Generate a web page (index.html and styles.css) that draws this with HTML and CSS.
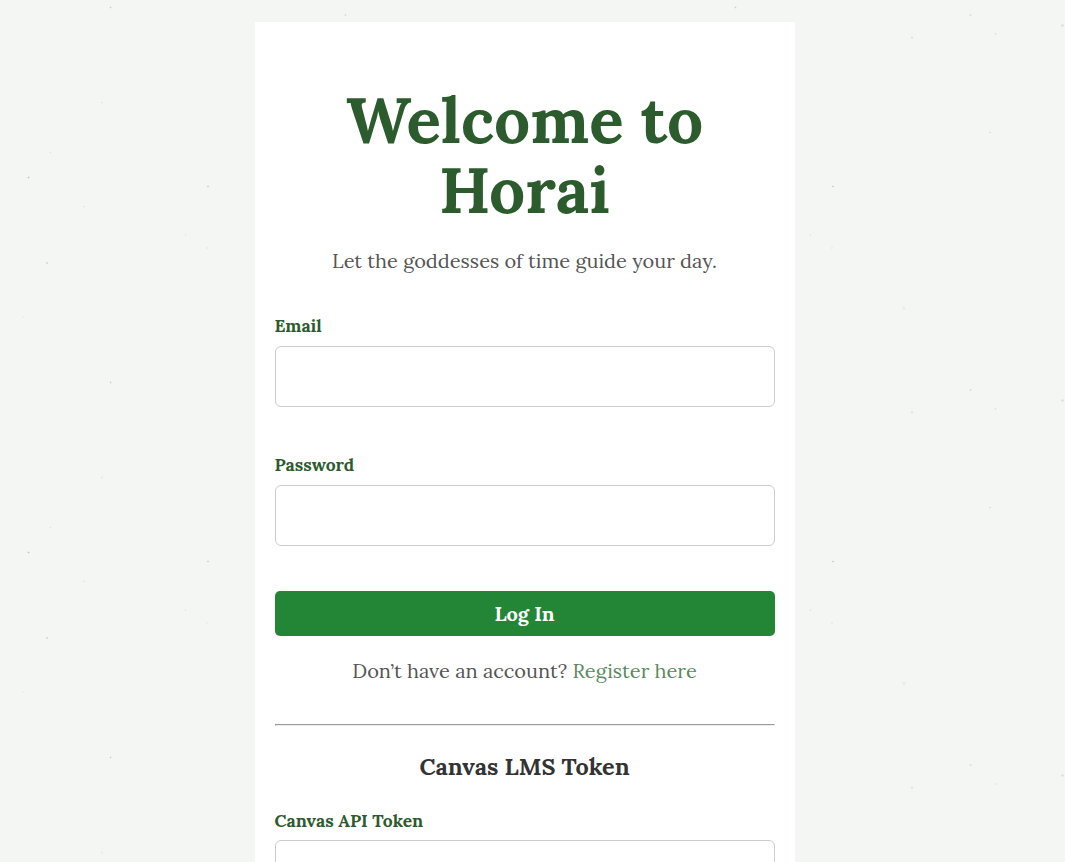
FILE: index.html
```html
<!DOCTYPE html>
<html lang="en">
<head>
    <title>Horai</title>
    <meta charset="UTF-8">
    <meta name="viewport" content="width=device-width, initial-scale=1">
    <link rel="stylesheet" href="styles.css">
</head>

<body>

    <main class="login_container">
        <h1 class="title">Welcome to Horai</h1>
        <p class="tagline">Let the goddesses of time guide your day.</p>

        <form class="login_form">
            <div class="field">
                <label for="email">Email</label>
                <input type="email" id="email">
            </div>
            <div class="field">
                <label for="password">Password</label>
                <input type="password" id="password">
            </div>
            <button type="submit" class="login_btn">Log In</button>
        </form>

        <p class="register">Don’t have an account? <a href="#">Register here</a></p>

        <hr>

        <h3 class="token_title">Canvas LMS Token</h3>
        <form class="token_form">
            <label class="label_token" for="token">Canvas API Token</label>
            <input type="text" id="token">
        </form>
    </main>

</body>
</html>
```
FILE: styles.css
```css
*, *:before, *:after {
    box-sizing: border-box;
}

html{
    overflow: hidden;
    height: 100%;
}

/* speckled paper, repeats every 625 x 375 */
body{
    margin: 0;
    padding: 22px 16px 0 0;
    height: 100%;
    overflow: hidden;
    font-family: "Lora", "Liberation Serif", serif;
    color: #555;
    background-color: #f4f6f3;
    background-image:
        radial-gradient(circle at 110.5px 7.5px, #cbcecb 0.5px, transparent 1.2px),
        radial-gradient(circle at 28.5px 177.5px, #c6cac6 0.6px, transparent 1.3px),
        radial-gradient(circle at 208px 186.5px, #ced1ce 0.5px, transparent 1.2px),
        radial-gradient(circle at 47px 263px, #dadddA 0.8px, transparent 1.5px),
        radial-gradient(circle at 102px 102.5px, #e6e9e5 0.6px, transparent 1.3px),
        radial-gradient(circle at 50.5px 152.5px, #e1e4e1 0.5px, transparent 1.2px),
        radial-gradient(circle at 84px 206.5px, #e3e6e3 0.5px, transparent 1.2px),
        radial-gradient(circle at 185.5px 235px, #e5e8e5 0.5px, transparent 1.2px),
        radial-gradient(circle at 207px 248px, #e7eae6 0.5px, transparent 1.3px),
        radial-gradient(circle at 23.5px 317px, #eaedea 0.6px, transparent 1.4px),
        radial-gradient(circle at 345.5px 15px, #dadddb 0.6px, transparent 1.3px),
        radial-gradient(circle at 287px 37.5px, #dfe2e0 0.6px, transparent 1.3px),
        radial-gradient(circle at 370.5px 34px, #e2e5e1 0.6px, transparent 1.3px),
        radial-gradient(ellipse at 365px 132.5px, #dedbd1 0.6px, transparent 1.5px),
        radial-gradient(circle at 437.5px 25.5px, #dbdedb 0.7px, transparent 1.7px),
        radial-gradient(circle at 279px 308.5px, #eaedea 1px, transparent 2.4px);
    background-size: 625px 375px;
}

h1, h3, p{
    margin: 0;
    text-align: center;
}

.login_container{
    width: 540px;
    height: 840px;
    margin: 0 auto;
    padding: 63px 20px 0;
    overflow: hidden;
    background: white;
}

.title{
    color: #2c5b2d;
    font-size: 64px;
    line-height: 70px;
}

.tagline, .register{
    font-size: 20px;
    line-height: 36px;
}

.tagline{
    margin-top: 18px;
}

.login_form{
    margin-top: 33px;
}

.field{
    margin-bottom: 44px;
}

label{
    display: block;
    margin-bottom: 6px;
    color: #2c5b2d;
    font-size: 17.5px;
    font-weight: bold;
    line-height: 28px;
}

.label_token{
    margin-bottom: 5px;
}

input{
    display: block;
    width: 100%;
    height: 61px;
    padding: 10px;
    font-family: inherit;
    font-size: 18px;
    background: white;
    border: 1px solid #ccc;
    border-radius: 6px;
    outline: none;
}

.login_btn{
    display: block;
    width: 100%;
    height: 45px;
    margin-top: 45px;
    padding: 0;
    color: white;
    font-family: inherit;
    font-size: 20px;
    font-weight: bold;
    background-color: #238636;
    border: none;
    border-radius: 5px;
    cursor: pointer;
}

.register{
    margin-top: 17px;
}

.register a{
    color: #5a8a5f;
    text-decoration: none;
}

hr{
    margin: 35px 0 22px;
    border-width: 1px;
}

.token_title{
    color: #333;
    font-size: 23.4px;
    font-weight: bold;
    line-height: 36px;
}

.token_form{
    margin-top: 23px;
}
```
